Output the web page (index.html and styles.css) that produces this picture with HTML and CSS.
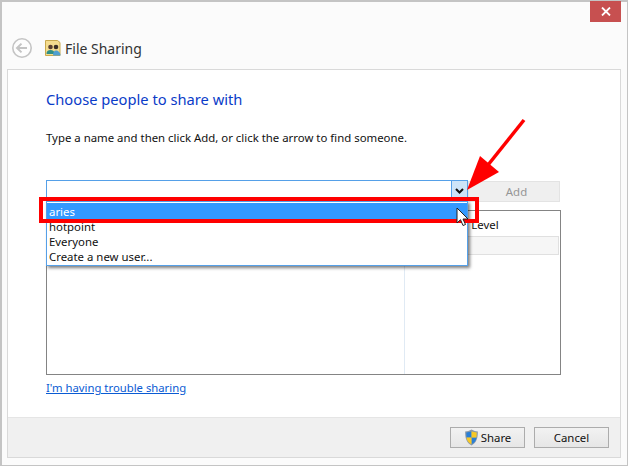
FILE: index.html
```html
<!DOCTYPE html>
<html lang="en">
<head>
<meta charset="utf-8">
<title>File Sharing</title>
<link rel="stylesheet" href="styles.css">
</head>
<body>
<div class="window">
  <div class="titlebar">
    <div class="close"><svg width="10" height="9" viewBox="0 0 10 9"><path d="M1 .5 9 8.500M9 .5 1 8.500" stroke="#fff" stroke-width="1.800" fill="none"/></svg></div>
    <div class="nav">
      <svg class="back" width="22" height="22" viewBox="0 0 22 22"><circle cx="11" cy="11" r="9.200" fill="#fdfdfd" stroke="#c4c4c4" stroke-width="1.600"/><path d="M6 11h10M10.500 6.600 6 11l4.500 4.400" fill="none" stroke="#c4c4c4" stroke-width="2"/></svg>
      <svg class="app" width="16" height="16" viewBox="0 0 16 16"><path d="M.5 .5h12l2.500 2v13H.5z" fill="#f5dc8e" stroke="#c9a94e"/><circle cx="5.500" cy="7" r="2.300" fill="#5a4030"/><path d="M1.500 14c0-3 1.500-4 4-4s4 1 4 4z" fill="#2f8f86"/><circle cx="11" cy="7" r="2.300" fill="#3a2e26"/><path d="M8 15.500c0-3 1-5 3-5s4.500 2 4.500 5z" fill="#4f9fd0"/></svg>
      <span class="title">File Sharing</span>
    </div>
  </div>
  <div class="content">
    <div class="main">
      <h1 class="heading">Choose people to share with</h1>
      <p class="instructions">Type a name and then click Add, or click the arrow to find someone.</p>
      <div class="picker">
        <div class="combo">
          <div class="combo-input"></div>
          <div class="combo-arrow"><svg width="9" height="6" viewBox="0 0 9 6"><path d="M1 1l3.500 3.500L8 1" fill="none" stroke="#111" stroke-width="2"/></svg></div>
        </div>
        <div class="add">Add</div>
      </div>
      <div class="list">
        <div class="col-name"></div>
        <div class="col-level">
          <div class="col-head">Permission Level</div>
          <div class="row"></div>
        </div>
      </div>
      <a class="trouble" href="#">I'm having trouble sharing</a>
    </div>
    <div class="footer">
      <div class="btn">
        <svg width="15" height="17" viewBox="0 0 14 16"><path d="M7 .5c2 1.200 4 1.700 6 1.800 0 6-1 10.500-6 13.200C2 12.800 1 8.300 1 2.300 3 2.200 5 1.700 7 .5z" fill="#8d9aa8"/><path d="M7 2v6H2.300c0-1.800-.2-3.600-.2-4.800C4 3 5.500 2.700 7 2zM7 8h4.700C11.300 11 10 13 7 14.300z" fill="#2a7fd6"/><path d="M7 2c1.500.7 3 1 4.900 1.200 0 1.200-.1 3-.2 4.800H7zM7 8v6.300C4 13 2.700 11 2.300 8z" fill="#f7c927"/></svg>
        <span>Share</span>
      </div>
      <div class="btn">Cancel</div>
    </div>
  </div>
</div>
<div class="dropdown">
  <div class="item active">aries</div>
  <div class="item">hotpoint</div>
  <div class="item">Everyone</div>
  <div class="item">Create a new user...</div>
</div>
<div class="callout"></div>
<svg class="arrow" width="70" height="80" viewBox="0 0 70 80"><path d="M58 2 22 47" stroke="#f00" stroke-width="3.500" fill="none"/><path d="M1 72 14 38 33 54z" fill="#f00"/></svg>
<svg class="cursor" width="14" height="20" viewBox="0 0 14 20"><path d="M1 1v15l3.500-3.300 2.500 5.800 2.500-1-2.500-5.500H12z" fill="#fff" stroke="#222" stroke-width="1"/></svg>
</body>
</html>
```
FILE: styles.css
```css
* { box-sizing: border-box; }
html, body { margin: 0; padding: 0; }
body {
  width: 628px;
  height: 466px;
  position: relative;
  overflow: hidden;
  background: #fff;
  font-family: "Noto Sans", "Open Sans", sans-serif;
  font-size: 11.400px;
  color: #111;
}
.window {
  width: 628px;
  height: 466px;
  display: flex;
  flex-direction: column;
  background: #fbfbfb;
  border: 1px solid #c4c4c4;
  border-top-width: 2px;
  border-left-width: 2px;
  padding: 0 6px 7px 5px;
}
.titlebar {
  height: 67px;
  flex: none;
  position: relative;
}
.close {
  position: absolute;
  top: -1px;
  right: 0;
  width: 31px;
  height: 21px;
  background: #c75050;
  display: flex;
  align-items: center;
  justify-content: center;
}
.nav {
  position: absolute;
  left: 4px;
  top: 35px;
  display: flex;
  align-items: center;
}
.back { margin-right: 12px; }
.app { margin-right: 4px; }
.title { font-size: 14px; color: #333; }
.content {
  flex: 1;
  display: flex;
  flex-direction: column;
  background: #fff;
  border: 1px solid #d9d9d9;
}
.main {
  flex: 1;
  padding: 0 59px 0 38px;
  display: flex;
  flex-direction: column;
}
.heading {
  margin: 18px 0 0;
  font-size: 14.700px;
  font-weight: 400;
  line-height: 22px;
  color: #0a3cc8;
}
.instructions {
  margin: 20px 0 0;
  line-height: 16px;
}
.picker {
  display: flex;
  margin-top: 34px;
  height: 22px;
}
.combo {
  width: 422px;
  height: 22px;
  display: flex;
  border: 1px solid #55a0e8;
}
.combo-input { flex: 1; }
.combo-arrow {
  width: 16px;
  background: #cde4f8;
  border-left: 1px solid #55a0e8;
  display: flex;
  align-items: center;
  justify-content: center;
}
.add {
  width: 92px;
  height: 21px;
  margin-top: 1px;
  padding-left: 5px;
  background: #efefef;
  border: 1px solid #e3e3e3;
  color: #959595;
  text-align: center;
  line-height: 19px;
}
.list {
  margin-top: 8px;
  height: 165px;
  width: 515px;
  border: 1px solid #848484;
  display: flex;
}
.col-name { width: 358px; border-right: 1px solid #e0eaf4; }
.col-level { flex: 1; min-width: 0; }
.col-head {
  height: 25px;
  line-height: 27px;
  white-space: nowrap;
  padding-left: 4px;
}
.row {
  height: 19px;
  margin: 0 1px 0 0;
  background: #f6f6f6;
  border: 1px solid #e0e0e0;
}
.trouble {
  margin-top: 5px;
  color: #0a5bd3;
  line-height: 16px;
  text-decoration: underline;
  align-self: flex-start;
  font-size: 11.300px;
}
.footer {
  flex: none;
  height: 40px;
  background: #f0f0f0;
  border-top: 1px solid #e5e5e5;
  display: flex;
  justify-content: flex-end;
  align-items: flex-start;
  gap: 9px;
  padding: 9px 11px 0 0;
}
.btn {
  width: 75px;
  height: 21px;
  display: flex;
  align-items: center;
  justify-content: center;
  gap: 2px;
  background: linear-gradient(#f2f2f2, #e6e6e6);
  border: 1px solid #acacac;
  color: #111;
  font-size: 11.400px;
}
.dropdown {
  position: absolute;
  left: 46px;
  top: 201px;
  width: 422px;
  height: 65px;
  background: #fff;
  border: 1px solid #55a0e8;
  box-shadow: 2px 2px 3px rgba(0,0,0,.5);
  padding-top: 1px;
}
.item {
  height: 15px;
  line-height: 15px;
  padding-left: 2px;
}
.item.active {
  height: 17px;
  line-height: 17px;
  margin-bottom: -1px;
  background: #3399ff;
  color: #fff;
}
.callout {
  position: absolute;
  left: 39px;
  top: 197px;
  width: 440px;
  height: 26px;
  border: 4px solid #f00;
}
.arrow { position: absolute; left: 466px; top: 118px; }
.cursor { position: absolute; left: 456px; top: 207px; }
```
